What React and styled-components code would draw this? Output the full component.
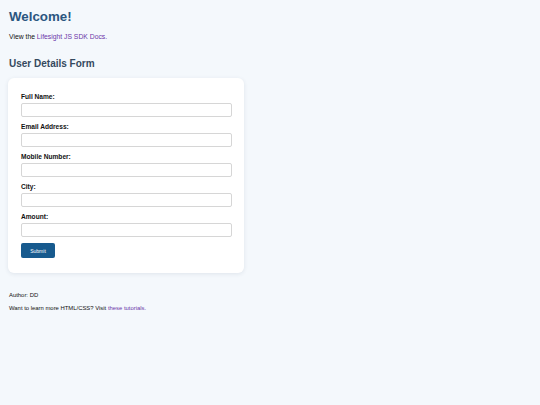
import React from "react";
import styled, { createGlobalStyle } from "styled-components";

const GlobalStyle = createGlobalStyle`
  html, body {
    margin: 0;
    padding: 0;
    background: #f4f8fc;
  }
  body {
    font-family: "Liberation Sans", Arial, sans-serif;
    color: #111;
  }
`;

const Page = styled.div`
  padding: 9px 9px;
  min-height: 405px;
  box-sizing: border-box;
`;

const Title = styled.h1`
  margin: 0 0 8px;
  font-size: 13.3px;
  line-height: 16px;
  color: #2b5680;
`;

const Text = styled.p`
  margin: ${(p) => p.$margin || "0"};
  font-size: ${(p) => p.$size || "6.8px"};
  line-height: 8px;
`;

const Link = styled.a`
  color: #6b35a8;
  text-decoration: none;
`;

const SubTitle = styled.h2`
  margin: 17px 0 8px;
  font-size: 10px;
  line-height: 12px;
  color: #34495e;
`;

const Card = styled.form`
  width: 236px;
  box-sizing: border-box;
  margin-left: -1px;
  padding: 15px 12px 15px 13px;
  background: #fff;
  border-radius: 6px;
  box-shadow: 0 1px 4px rgba(40, 60, 90, 0.1);
`;

const Label = styled.label`
  display: block;
  margin-bottom: 2px;
  font-size: 6.6px;
  line-height: 8px;
  font-weight: bold;
  color: #111;
`;

const Input = styled.input`
  display: block;
  width: 100%;
  height: 14px;
  box-sizing: border-box;
  margin: 0 0 6px;
  padding: 0 4px;
  border: 1px solid #d6d6d6;
  border-radius: 2px;
  background: #fff;
  font-size: 6.5px;
`;

const Button = styled.button`
  display: block;
  margin-top: 4px;
  width: 34px;
  height: 15px;
  padding: 0;
  border: none;
  border-radius: 2px;
  background: #175a8e;
  color: #fff;
  font-family: "Liberation Sans", Arial, sans-serif;
  font-size: 5px;
`;

const Footer = styled.div`
  margin-top: 18px;
`;

const fields = ["Full Name:", "Email Address:", "Mobile Number:", "City:", "Amount:"];

const App = () => {
  return (
    <>
      <GlobalStyle />
      <Page>
        <Title>Welcome!</Title>
        <Text>
          View the <Link href="#">Lifesight JS SDK Docs.</Link>
        </Text>
        <SubTitle>User Details Form</SubTitle>
        <Card onSubmit={(e) => e.preventDefault()}>
          {fields.map((field) => (
            <div key={field}>
              <Label>{field}</Label>
              <Input type="text" />
            </div>
          ))}
          <Button type="submit">Submit</Button>
        </Card>
        <Footer>
          <Text $size="5.9px" $margin="0 0 5px">Author: DD</Text>
          <Text $size="5.9px">
            Want to learn more HTML/CSS? Visit <Link href="#">these tutorials.</Link>
          </Text>
        </Footer>
      </Page>
    </>
  );
};

export default App;
